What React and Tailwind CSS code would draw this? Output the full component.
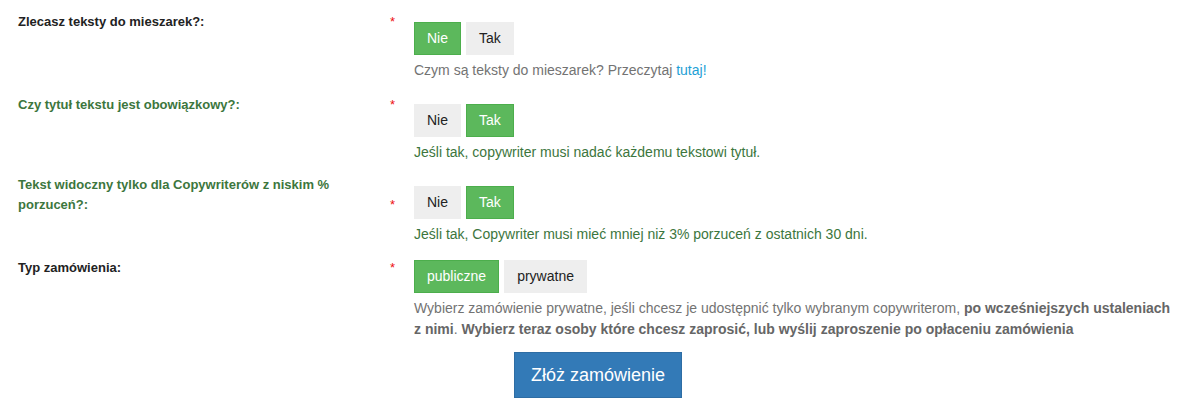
import { useState } from "react"

function Toggle({ options, value, onChange }) {
  return (
    <div className="flex gap-[5px]">
      {options.map(opt => (
        <button
          key={opt}
          onClick={() => onChange(opt)}
          className={
            opt === value
              ? "px-3 py-[6px] text-[14px] leading-[19px] border border-[#4cae4c] bg-[#5cb85c] text-white"
              : "px-3 py-[6px] text-[14px] leading-[19px] border border-[#eeeeee] bg-[#eeeeee] text-[#222]"
          }
        >
          {opt}
        </button>
      ))}
    </div>
  )
}

function Row({ label, success, controlsTop, className, children }) {
  return (
    <div className={"flex items-start " + (className || "")}>
      <div className="w-[414px] shrink-0 flex items-end pl-[18px]">
        <div
          className={
            "w-[372px] text-[13px] font-bold leading-5 " +
            (success ? "text-[#3c763d]" : "text-[#222]")
          }
        >
          {label}
        </div>
        <span className="w-[24px] text-[13px] leading-5 text-[#ee1111]">*</span>
      </div>
      <div className={"w-[762px] " + controlsTop}>{children}</div>
    </div>
  )
}

export default function App() {
  const [mixer, setMixer] = useState("Nie")
  const [title, setTitle] = useState("Tak")
  const [lowDrop, setLowDrop] = useState("Tak")
  const [type, setType] = useState("publiczne")

  return (
    <div className="w-[1204px] h-[411px] overflow-hidden bg-white pt-[12px] font-['Liberation_Sans',Arial,sans-serif]">
      <Row label="Zlecasz teksty do mieszarek?:" controlsTop="pt-[10px]">
        <Toggle options={["Nie", "Tak"]} value={mixer} onChange={setMixer} />
        <p className="mt-[5px] text-[14px] leading-5 text-[#737373]">
          Czym są teksty do mieszarek? Przeczytaj{" "}
          <a href="#" className="text-[#1e9fd6]">tutaj!</a>
        </p>
      </Row>

      <Row label="Czy tytuł tekstu jest obowiązkowy?:" success controlsTop="pt-[9px]" className="mt-[15px]">
        <Toggle options={["Nie", "Tak"]} value={title} onChange={setTitle} />
        <p className="mt-[5px] text-[14px] leading-5 text-[#3c763d]">
          Jeśli tak, copywriter musi nadać każdemu tekstowi tytuł.
        </p>
      </Row>

      <Row
        label="Tekst widoczny tylko dla Copywriterów z niskim % porzuceń?:"
        success
        controlsTop="pt-[11px]"
        className="mt-[13px]"
      >
        <Toggle options={["Nie", "Tak"]} value={lowDrop} onChange={setLowDrop} />
        <p className="mt-[5px] text-[14px] leading-5 text-[#3c763d]">
          Jeśli tak, Copywriter musi mieć mniej niż 3% porzuceń z ostatnich 30 dni.
        </p>
      </Row>

      <Row label="Typ zamówienia:" controlsTop="pt-[2px]" className="mt-[14px]">
        <Toggle options={["publiczne", "prywatne"]} value={type} onChange={setType} />
        <p className="mt-[5px] text-[14px] leading-[21px] text-[#737373]">
          Wybierz zamówienie prywatne, jeśli chcesz je udostępnić tylko wybranym copywriterom,{" "}
          <b className="text-[#666]">po wcześniejszych ustaleniach z nimi</b>.{" "}
          <b className="text-[#666]">
            Wybierz teraz osoby które chcesz zaprosić, lub wyślij zaproszenie po opłaceniu zamówienia
          </b>
        </p>
        <button className="mt-[12px] ml-[100px] px-4 py-[10px] text-[18px] leading-6 border border-[#2e6da4] bg-[#337ab7] text-white">
          Złóż zamówienie
        </button>
      </Row>
    </div>
  )
}
